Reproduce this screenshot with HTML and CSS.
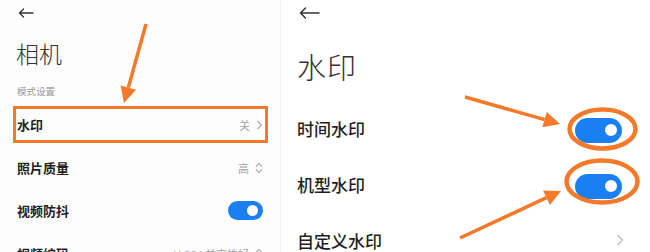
FILE: index.html
```html
<!DOCTYPE html>
<html lang="zh">
<head>
<meta charset="utf-8">
<link rel="stylesheet" href="styles.css">
</head>
<body>
<div class="page">
  <section class="panel left">
    <div class="topbar">
      <svg class="back" width="16" height="10" viewBox="0 0 16 10"><path d="M15 5H1.5M5.5 1L1.5 5l4 4" fill="none" stroke="#333" stroke-width="1.3" stroke-linecap="round" stroke-linejoin="round"/></svg>
    </div>
    <h1 class="title small">相机</h1>
    <div class="section-label">模式设置</div>
    <div class="list">
      <div class="row s">
        <span class="label">水印</span>
        <span class="value">关<svg width="7" height="10" viewBox="0 0 7 10"><path d="M1.5 1l4 4-4 4" fill="none" stroke="#aaa" stroke-width="1.1"/></svg></span>
      </div>
      <div class="row s">
        <span class="label">照片质量</span>
        <span class="value">高<svg width="8" height="12" viewBox="0 0 8 12"><path d="M1 4.5l3-3 3 3M1 7.5l3 3 3-3" fill="none" stroke="#aaa" stroke-width="1.1"/></svg></span>
      </div>
      <div class="row s">
        <span class="label">视频防抖</span>
        <span class="toggle sm"><span class="knob"></span></span>
      </div>
      <div class="row s">
        <span class="label">视频编码</span>
        <span class="value">H.264 兼容性好<svg width="8" height="12" viewBox="0 0 8 12"><path d="M1 4.5l3-3 3 3M1 7.5l3 3 3-3" fill="none" stroke="#aaa" stroke-width="1.1"/></svg></span>
      </div>
    </div>
  </section>
  <section class="panel right">
    <div class="topbar">
      <svg class="back" width="21" height="12" viewBox="0 0 21 12"><path d="M20 6H1.5M6.5 1L1.5 6l5 5" fill="none" stroke="#333" stroke-width="1.5" stroke-linecap="round" stroke-linejoin="round"/></svg>
    </div>
    <h1 class="title big">水印</h1>
    <div class="list">
      <div class="row l">
        <span class="label">时间水印</span>
        <span class="toggle lg"><span class="knob"></span></span>
      </div>
      <div class="row l">
        <span class="label">机型水印</span>
        <span class="toggle lg"><span class="knob"></span></span>
      </div>
      <div class="row l">
        <span class="label">自定义水印</span>
        <svg class="chev" width="8" height="12" viewBox="0 0 8 12"><path d="M1.5 1l5 5-5 5" fill="none" stroke="#bbb" stroke-width="1.2"/></svg>
      </div>
    </div>
  </section>
  <svg class="marks" width="650" height="252" viewBox="0 0 650 252">
    <g fill="#f47a29" stroke="#f47a29">
      <rect x="14.5" y="107.5" width="252" height="34" fill="none" stroke-width="3"/>
      <line x1="146" y1="24" x2="128.3" y2="87.6" stroke-width="3.5"/>
      <polygon points="124,103 136,89.7 120.6,85.5" stroke="none"/>
      <line x1="465" y1="97" x2="544.6" y2="119.6" stroke-width="3.5"/>
      <polygon points="560,124 542.4,127.3 546.8,111.9" stroke="none"/>
      <line x1="460" y1="238" x2="546.5" y2="197.7" stroke-width="3.5"/>
      <polygon points="561,191 549.9,205 543.1,190.5" stroke="none"/>
      <ellipse cx="602.5" cy="129" rx="33" ry="19.5" fill="none" stroke-width="4.5"/>
      <ellipse cx="602" cy="181.5" rx="35.5" ry="21" fill="none" stroke-width="4.5"/>
    </g>
  </svg>
</div>
</body>
</html>
```
FILE: styles.css
```css
* { box-sizing: border-box; margin: 0; padding: 0; }
html, body { width: 650px; height: 252px; overflow: hidden; background: #fff; }
body { font-family: "Noto Sans CJK SC", "Noto Sans", sans-serif; color: #1f1f1f; }
.page { position: relative; display: flex; width: 650px; height: 252px; overflow: hidden; }
.panel { display: flex; flex-direction: column; }
.panel > * { flex-shrink: 0; }
.left { width: 280px; padding: 0 17px; background: #fdfdfd; }
.right { flex: 1; padding: 0 28px 0 16px; border-left: 1px solid #f1f1f1; background: #fff; }
.topbar { height: 26px; display: flex; align-items: center; }
.left .back { margin-left: 1px; }
.right .back { margin-left: 2px; }
.title { font-weight: 300; color: #333; }
.title.small { font-size: 23px; line-height: 30px; margin-top: 12px; margin-left: -1px; }
.title.big { font-size: 29px; line-height: 36px; margin-top: 22px; letter-spacing: 1px; }
.section-label { font-size: 9.5px; line-height: 14px; color: #9a9a9a; margin-top: 16px; margin-bottom: 5px; }
.list { display: flex; flex-direction: column; }
.row { display: flex; align-items: center; justify-content: space-between; flex-shrink: 0; }
.row.s { height: 43px; }
.row.s .label { font-size: 13px; font-weight: 600; }
.row.l { height: 56px; }
.row.l .label { font-size: 17px; font-weight: 500; }
.right .list { margin-top: 16px; }
.value { display: flex; align-items: center; gap: 6px; font-size: 11px; color: #a5a5a5; }
.toggle { display: flex; align-items: center; justify-content: flex-end; background: #1a80f2; }
.toggle .knob { background: #fff; border-radius: 50%; }
.toggle.sm { width: 35px; height: 19px; border-radius: 10px; padding-right: 5px; }
.toggle.sm .knob { width: 11px; height: 11px; }
.toggle.lg { width: 47px; height: 25px; border-radius: 13px; padding-right: 5px; margin-top: 4px; }
.toggle.lg .knob { width: 12px; height: 12px; }
.chev { margin-right: -2px; }
.marks { position: absolute; left: 0; top: 0; pointer-events: none; }
```
